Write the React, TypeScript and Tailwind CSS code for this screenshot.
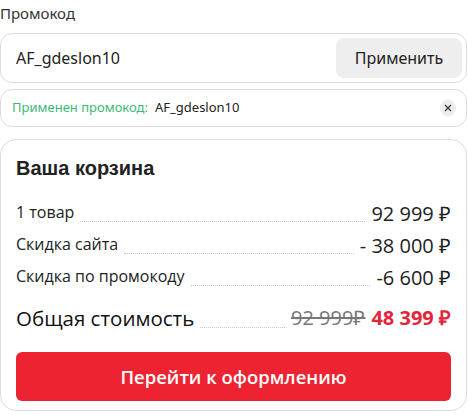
import React from "react";

const rows = [
  { label: "1 товар", value: "92 999 ₽" },
  { label: "Скидка сайта", value: "- 38 000 ₽" },
  { label: "Скидка по промокоду", value: "-6 600 ₽" },
];

const Leader = () => (
  <div className="flex-1 mx-[6px] mb-[6px] border-b border-dotted border-[#c8c8c8]" />
);

export default function App() {
  return (
    <div className="w-[467px] bg-white text-[#222] font-['Noto_Sans',sans-serif]">
      <div className="text-[15px] leading-5 pt-[3px] text-[#333]">Промокод</div>

      <div className="mt-[10px] h-[50px] flex items-center justify-between border border-[#dcdcdc] rounded-[12px] pl-[15px] pr-[4px]">
        <span className="text-[16px] text-[#222]">AF_gdeslon10</span>
        <button className="h-[40px] w-[126px] rounded-[8px] bg-[#eeeeee] text-[16px] text-[#222]">
          Применить
        </button>
      </div>

      <div className="mt-[6px] h-[38px] flex items-center border border-[#dcdcdc] rounded-[12px] pl-[11px] pr-[10px]">
        <span className="text-[13px] text-[#3cb878]">Применен промокод:</span>
        <span className="ml-[7px] text-[13px] text-[#222]">AF_gdeslon10</span>
        <span className="ml-auto w-[16px] h-[16px] rounded-full bg-[#ececec] flex items-center justify-center text-[#333]">
          <svg width="8" height="8" viewBox="0 0 8 8">
            <path d="M1 1L7 7M7 1L1 7" stroke="currentColor" strokeWidth="1.2" />
          </svg>
        </span>
      </div>

      <div className="mt-[12px] border border-[#dcdcdc] rounded-[16px] px-[15px] pt-[14px] pb-[9px] font-['Open_Sans',sans-serif]">
        <div className="font-['Liberation_Sans',sans-serif] font-bold text-[20px] leading-7 text-[#222]">
          Ваша корзина
        </div>

        <div className="mt-[14px] flex flex-col">
          {rows.map((r) => (
            <div key={r.label} className="flex items-end h-[32px]">
              <span className="text-[16px] leading-6 text-[#222] mb-[4px]">{r.label}</span>
              <Leader />
              <span className="text-[20px] leading-7 text-[#222]">{r.value}</span>
            </div>
          ))}
          <div className="flex items-end h-[38px] mt-[4px]">
            <span className="text-[20.5px] leading-8 font-medium text-[#111]">Общая стоимость</span>
            <Leader />
            <span className="text-[20px] leading-8 text-[#777] line-through">92 999₽</span>
            <span className="ml-[6px] text-[20px] leading-8 font-bold text-[#e5243b]">48 399 ₽</span>
          </div>
        </div>

        <button className="mt-[18px] w-full h-[49px] rounded-[6px] bg-[#ee2331] text-white text-[18.5px] font-semibold">
          Перейти к оформлению
        </button>
      </div>
    </div>
  );
}
